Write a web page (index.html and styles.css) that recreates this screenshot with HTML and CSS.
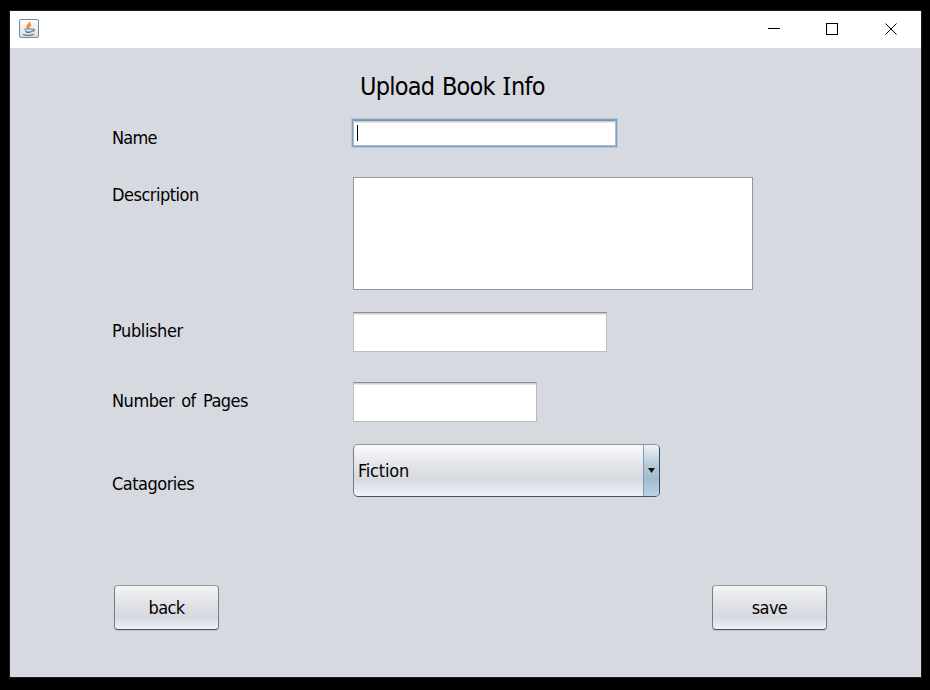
FILE: index.html
```
<!DOCTYPE html>
<html lang="en">
<head>
<meta charset="utf-8">
<title>Upload Book Info</title>
<link rel="stylesheet" href="styles.css">
</head>
<body>
<div class="window">
  <header class="titlebar">
    <svg class="app-icon" width="20" height="20" viewBox="0 0 20 20">
      <defs><linearGradient id="tile" x2="0" y2="1"><stop offset="0" stop-color="#fff"/><stop offset="1" stop-color="#dcdcdc"/></linearGradient></defs>
      <rect x=".5" y=".5" width="19" height="18" rx="1.500" fill="url(#tile)" stroke="#72899c"/>
      <path d="M10.800 3c.5 2-3.300 3-2.600 4.800.2.700.9 1.200 1.100 1.700M12 5.500c-2.300 1.200-2 2-1.300 3" fill="none" stroke="#ed8732" stroke-width="1.700"/>
      <path d="M5.500 10h8.500M6 11.500c1 2 6 2 7.500 0M14 10.300c2-.5 1.500 1.700-.5 2M7 13.500h5M4 15.500c2 1.300 9 1.200 11-.2" fill="none" stroke="#5b7f98" stroke-width="1.200"/>
    </svg>
    <svg class="controls" width="130" height="13" viewBox="0 0 130 13" fill="none" stroke="#000">
      <path d="M0 6.500h12M58.500 1.500h11v11h-11z" shape-rendering="crispEdges"/>
      <path d="M117.500 1.500l11 11M128.500 1.500l-11 11"/>
    </svg>
  </header>
  <main class="content">
    <h1 class="title">Upload Book <span class="serif-i">I</span>nfo</h1>
    <div class="row name"><label>Name</label><div class="field focused"><span class="caret"></span></div></div>
    <div class="row description"><label>Description</label><div class="area"></div></div>
    <div class="row publisher"><label>Publisher</label><div class="field"></div></div>
    <div class="row pages"><label>Number of Pages</label><div class="field"></div></div>
    <div class="row categories"><label>Catagories</label>
      <div class="combo"><span class="value">Fiction</span><span class="arrow"><svg width="7" height="5" viewBox="0 0 7 5"><path d="M0 0h7L3.500 5z" fill="#111"/></svg></span></div>
    </div>
    <div class="actions"><button class="button back">back</button><button class="button save">save</button></div>
  </main>
</div>
</body>
</html>
```
FILE: styles.css
```
* { box-sizing: border-box; }
body {
  margin: 0;
  height: 690px;
  padding: 11px 9px 13px 10px;
  overflow: hidden;
  background: #000;
  color: #000;
  font: 18px/22px "DejaVu Sans Condensed", "DejaVu Sans", sans-serif;
  font-stretch: condensed;
}
.window {
  height: 666px;
  background: #d6d9e0;
  box-shadow: 0 0 0 1px #1c1a1d;
}
.titlebar {
  display: flex;
  justify-content: space-between;
  height: 37px;
  padding: 8px 23px 0 9px;
  background: #fff;
}
.controls { margin-top: 3px; }
.content { padding: 23px 94px 0 102px; }
.title {
  height: 31px;
  margin: 0 0 18px 248px;
  font-size: 25px;
  font-weight: 400;
  line-height: 31px;
  letter-spacing: -0.75px;
  word-spacing: 1.2px;
  white-space: nowrap;
}
.serif-i { font-family: "Noto Sans", sans-serif; line-height: 1; letter-spacing: 0; }
.row {
  display: grid;
  grid-template-columns: 241px max-content;
  align-items: start;
}
label { white-space: nowrap; letter-spacing: -0.5px; word-spacing: 2.5px; }
.name { height: 57px; }
.name label { padding-top: 7px; letter-spacing: -0.8px; }
.description { height: 135px; }
.description label { padding-top: 7px; }
.publisher { height: 70px; }
.publisher label { padding-top: 8px; letter-spacing: -0.4px; }
.pages { height: 62px; }
.pages label { padding-top: 8px; }
.categories { height: 141px; }
.categories label { padding-top: 29px; }
.field {
  height: 40px;
  background: #fff;
  border: 1px solid #bbbbbd;
  border-top-color: #8d8e91;
  box-shadow: inset 0 1px #cecece, inset 0 2px #e7e7e7;
}
.publisher .field { width: 254px; }
.pages .field { width: 184px; }
.focused {
  width: 263px;
  height: 26px;
  padding: 4px 3px;
  box-shadow: 0 0 0 1px #73a4d1, 0 0 0 2px #b3c8df, inset 0 1px #cecece, inset 0 2px #e7e7e7;
}
.caret { display: block; width: 1px; height: 16px; background: #000; }
.area { width: 400px; height: 113px; background: #fff; border: 1px solid #9297a1; }
.combo {
  display: flex;
  width: 307px;
  height: 53px;
  border: 1px solid;
  border-color: #91959d #294a65 #4d515b #777b84;
  border-radius: 5px;
  overflow: hidden;
  background: linear-gradient(#fbfbfc, #e3e4e8 40%, #d6d9e0 68%, #eff3fd);
}
.value { flex: 1; padding: 15px 0 0 4px; letter-spacing: -0.2px; }
.arrow {
  display: flex;
  align-items: center;
  justify-content: center;
  width: 16px;
  border-left: 1px solid #829bb1;
  background: linear-gradient(#edf2f5, #b7c9d7 40%, #a4bbce 65%, #bad1e8);
}
.actions { display: flex; justify-content: space-between; padding-left: 2px; }
.button {
  height: 45px;
  padding: 0;
  font: inherit;
  color: #000;
  letter-spacing: -0.6px;
  border: 1px solid;
  border-color: #989ba2 #777b83 #4f535c #777b83;
  border-radius: 4px;
  background: linear-gradient(#f4f5f6, #e1e3e6 40%, #d6d9e0 72%, #edf1f9);
  box-shadow: 0 1px #bfc2c9;
}
.back { width: 105px; }
.save { width: 115px; }
```
